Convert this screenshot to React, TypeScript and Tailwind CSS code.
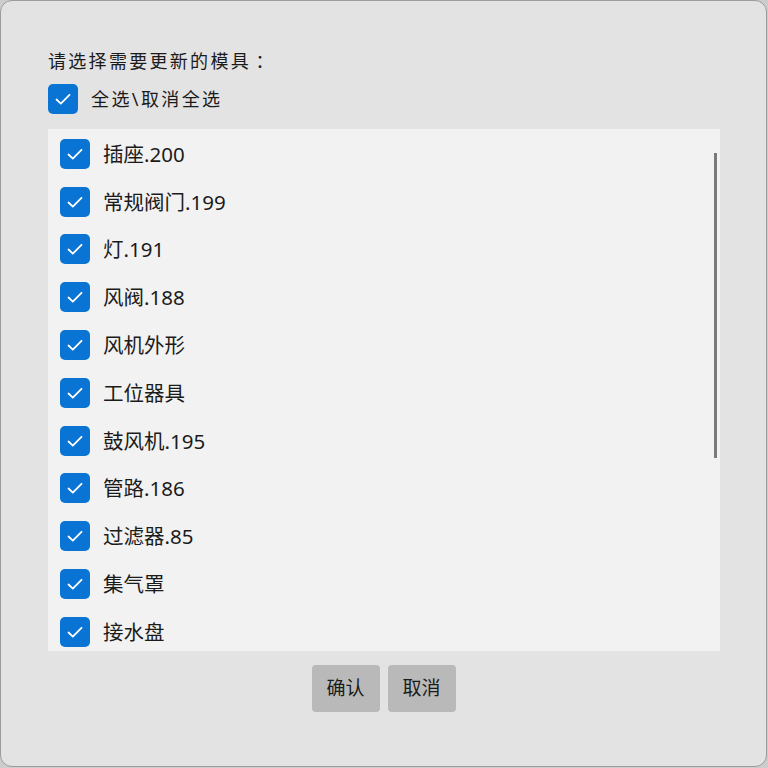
import React from "react";

const items = [
  "插座.200",
  "常规阀门.199",
  "灯.191",
  "风阀.188",
  "风机外形",
  "工位器具",
  "鼓风机.195",
  "管路.186",
  "过滤器.85",
  "集气罩",
  "接水盘",
];

function Check() {
  return (
    <div className="w-[30px] h-[30px] rounded-[5px] bg-[#0a74d4] flex items-center justify-center shrink-0">
      <svg width="30" height="30" viewBox="0 0 30 30" fill="none">
        <path d="M8.5 15.5 L12.8 19.6 L21.5 10.8" stroke="white" strokeWidth="1.8" strokeLinecap="round" strokeLinejoin="round" />
      </svg>
    </div>
  );
}

export default function App() {
  return (
    <div
      className="w-[768px] h-[768px] bg-[#cdcdcd] text-[#1b1b1b]"
      style={{ fontFamily: '"Noto Sans", "Noto Sans CJK SC", sans-serif' }}
    >
      <div className="w-[767px] h-[767px] rounded-[12px] border border-[#9c9c9c] bg-[#e3e3e3] flex flex-col pl-[47px] pt-[48px]">
        <div className="h-[24px] flex items-center text-[18px] leading-[24px] tracking-[2.3px] overflow-hidden">
          <span>请选择需要更新的模具</span>
          <span className="font-['Noto_Sans_CJK_TC',sans-serif] leading-[24px]">：</span>
        </div>
        <div className="flex items-center gap-[13px] mt-[11px] h-[30px]">
          <Check />
          <span className="text-[18px] leading-[24px] tracking-[2.4px]">全选\取消全选</span>
        </div>
        <div className="relative mt-[15px] w-[672px] h-[522px] bg-[#f2f2f2] overflow-hidden pt-[1px]">
          {items.map((t) => (
            <div key={t} className="h-[47.8px] flex items-center pl-[12px] gap-[13px]">
              <Check />
              <span className="text-[20.5px] leading-[26px]">{t}</span>
            </div>
          ))}
          <div className="absolute left-[666px] top-[24px] w-[3px] h-[305px] bg-[#7a7a7a]" />
        </div>
        <div className="flex justify-center gap-[8px] mt-[14px] pr-[47px]">
          <button className="w-[68px] h-[47px] rounded-[4px] bg-[#b9b9b9] text-[19px]">确认</button>
          <button className="w-[68px] h-[47px] rounded-[4px] bg-[#b9b9b9] text-[19px]">取消</button>
        </div>
      </div>
    </div>
  );
}
